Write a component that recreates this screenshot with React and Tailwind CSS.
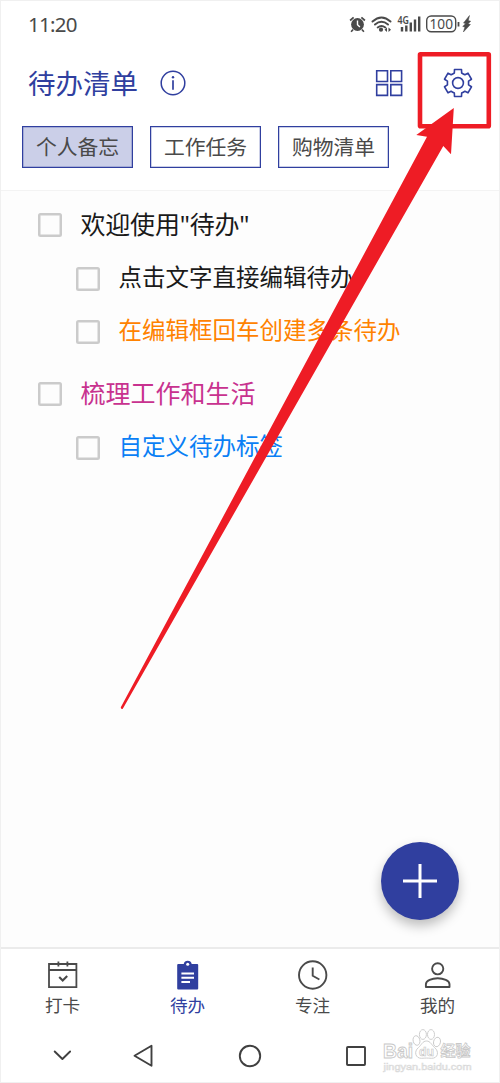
import React from "react";

const gearPath = () => {
  const pt = (r, deg) => {
    const a = ((deg - 90) * Math.PI) / 180;
    return `${(r * Math.cos(a)).toFixed(2)} ${(r * Math.sin(a)).toFixed(2)}`;
  };
  let d = "";
  for (let k = 0; k < 6; k++) {
    const c = k * 60;
    d += `${k ? "L" : "M"}${pt(10.7, c - 20)} L${pt(14, c - 14.5)} L${pt(14, c + 14.5)} L${pt(10.7, c + 20)} Q${pt(10.6, c + 30)} ${pt(10.7, c + 40)} `;
  }
  return d + "Z";
};

function StatusBar() {
  return (
    <div className="flex h-[46px] items-center justify-between pl-[27px] pr-[26px] text-[#4a4a4a]">
      <span className="text-[20.5px] leading-none tracking-[-0.7px] font-['Noto_Sans',sans-serif]">11:20</span>
      <svg className="h-[22px] w-[124px]" viewBox="349.5 13 124 22" fill="none" stroke="#4a4a4a">
        <circle cx="358" cy="24.5" r="6.4" fill="#4a4a4a" stroke="none" />
        <path d="M350.6 20.5l3.5-3.2M361.9 17.3l3.5 3.2M353.6 29.5l-2 2.2M362.4 29.5l2 2.2" strokeWidth="1.7" />
        <path d="M358 20.5v4.3l2.4 2.3" stroke="#fff" strokeWidth="1.4" />
        <path d="M373 21.5q9-8 18 0M375.5 24.6q6.5-5.5 13 0M378.2 27.5q3.8-3 7.6 0" strokeWidth="1.9" strokeLinecap="round" />
        <circle cx="381.5" cy="29.7" r="2.1" fill="#4a4a4a" stroke="none" />
        <path d="M385 29.8l2.5-2.2v4.4zM391.5 29.8l-2.5-2.2v4.4z" fill="#4a4a4a" stroke="none" />
        <text x="398" y="23.5" fontSize="10" fontWeight="600" fill="#4a4a4a" stroke="none" fontFamily="Noto Sans, sans-serif" textLength="11.5" lengthAdjust="spacingAndGlyphs">4G</text>
        <path d="M402.5 31.5v-4.5M406.8 31.5v-6M411.3 31.5v-9M415.5 31.5v-12M419.7 31.5v-15" strokeWidth="2.4" />
        <rect x="427.2" y="16" width="29" height="15.7" rx="4.5" strokeWidth="1.4" />
        <text x="430" y="29" fontSize="14.5" fill="#4a4a4a" stroke="none" fontFamily="Noto Sans, sans-serif" textLength="23.5" lengthAdjust="spacingAndGlyphs">100</text>
        <path d="M459 22v4.5" strokeWidth="1.8" />
        <path d="M470 15.5l-6 7.5 2.2.6-3 2.8 2.2.6-1.5 5 7-7.5-2.3-.7 2.6-2.6-2.4-.6z" fill="#4a4a4a" stroke="#4a4a4a" strokeWidth="0.5" />
      </svg>
    </div>
  );
}

function Header() {
  return (
    <div className="flex h-[72px] items-center pl-[27px] pr-[25px]">
      <h1 className="pt-px text-[27.5px] leading-none">待办清单</h1>
      <svg className="ml-[22px] h-[26px] w-[26px]" viewBox="0 0 26 26" fill="none" stroke="currentColor">
        <circle cx="13" cy="13" r="11.8" strokeWidth="1.5" />
        <path d="M13 10.2v9.5" strokeWidth="1.7" />
        <circle cx="13" cy="7.3" r="1.2" fill="currentColor" stroke="none" />
      </svg>
      <svg className="ml-auto h-[28px] w-[28px]" viewBox="0 0 28 28" fill="none" stroke="currentColor" strokeWidth="1.6">
        <path d="M1.7 1.7h10.8v10.8h-10.8zM15.8 1.7h10.8v10.8h-10.8zM1.7 15.6h10.8v10.8h-10.8zM15.8 15.6h10.8v10.8h-10.8z" />
      </svg>
      <svg className="ml-[39px] h-[32px] w-[32px]" viewBox="-16 -16 32 32" fill="none" stroke="currentColor" strokeWidth="1.6" strokeLinejoin="round">
        <path d={gearPath()} />
        <circle r="5.4" />
      </svg>
    </div>
  );
}

const chips = [
  { label: "个人备忘", active: true },
  { label: "工作任务", active: false },
  { label: "购物清单", active: false },
];

function Chips() {
  return (
    <div className="flex h-[71px] items-start gap-[17px] pl-[21px] pt-[7px]">
      {chips.map((c) => (
        <button
          key={c.label}
          className={`flex h-[42px] w-[111px] items-center justify-center border border-[#303f9f] text-[20.8px] leading-none text-[#4a4a4a] shadow-[inset_0_0_0_0.5px_rgba(48,63,159,0.5)] ${c.active ? "bg-[#cbcfe8]" : "bg-white"}`}
        >
          {c.label}
        </button>
      ))}
    </div>
  );
}

const tasks = [
  { text: '欢迎使用"待办"', row: "h-[54px] pl-[37px] text-[25px] tracking-[-0.2px] text-[#1a1a1a]" },
  { text: "点击文字直接编辑待办", row: "h-[53px] pl-[75px] text-[23.5px] text-[#1a1a1a]" },
  { text: "在编辑框回车创建多条待办", row: "h-[53px] pl-[75px] text-[23.5px] text-[#ff8200]" },
  { text: "梳理工作和生活", row: "mt-[9px] h-[54px] pl-[37px] text-[25px] text-[#c8328f]" },
  { text: "自定义待办标签", row: "h-[53px] pl-[75px] text-[23.5px] text-[#0a7ff5]" },
];

function TaskList() {
  return (
    <main className="flex flex-1 flex-col border-t border-[#f3f3f3] bg-[#fdfdfd] pt-[7px]">
      {tasks.map((t) => (
        <div key={t.text} className={`flex items-center gap-[18.5px] leading-none whitespace-nowrap ${t.row}`}>
          <span className="h-[24px] w-[24px] shrink-0 rounded-[2.5px] border-2 border-[#cbcbcb] shadow-[inset_0_0_0_0.5px_#cbcbcb]" />
          <span className="-mt-px">{t.text}</span>
        </div>
      ))}
      <button className="mt-auto mr-[40.5px] mb-[27px] flex h-[78px] w-[78px] items-center justify-center self-end rounded-full bg-[#303f9f] shadow-[0_6px_12px_rgba(0,0,0,0.25)]">
        <svg className="h-[34px] w-[34px]" viewBox="0 0 34 34" stroke="#fff" strokeWidth="3">
          <path d="M17 0v34M0 17h34" />
        </svg>
      </button>
    </main>
  );
}

const tabs = [
  {
    label: "打卡",
    icon: (
      <g fill="none" stroke="currentColor" strokeWidth="1.8">
        <path d="M2.3 4h27.4v23.2H2.3zM2.3 10h27.4M11.7 1.5v5M20.7 1.5v5" />
        <path d="M12.5 17l3.5 3.5 4.5-4.5" strokeWidth="2.1" />
      </g>
    ),
  },
  {
    label: "待办",
    active: true,
    icon: (
      <g>
        <path d="M6.5 4h5.5a4.1 4.1 0 0 1 8 0h5.500q1 0 1 1v23.500q0 1-1 1H6.500q-1 0-1-1V5q0-1 1-1z" fill="currentColor" />
        <circle cx="16" cy="4.3" r="1.5" fill="#fff" />
        <path d="M9.7 13.6h12.6M9.7 17.7h12.6M9.7 21.9h8.6" stroke="#fff" strokeWidth="2" />
      </g>
    ),
  },
  {
    label: "专注",
    icon: (
      <g fill="none" stroke="currentColor" strokeWidth="1.9">
        <circle cx="16" cy="15" r="13.7" />
        <path d="M16 7.5v8.3l6.7 3.7" />
      </g>
    ),
  },
  {
    label: "我的",
    icon: (
      <g fill="none" stroke="currentColor" strokeWidth="1.9" strokeLinejoin="round">
        <circle cx="16" cy="8.8" r="5.6" />
        <path d="M4.2 27v-2.8c0-3.6 6-6 11.8-6s11.8 2.4 11.8 6V27z" />
      </g>
    ),
  },
];

function TabBar() {
  return (
    <nav className="-mx-px grid h-[81px] grid-cols-4 border-t-2 border-[#ebebeb] pt-[11px]">
      {tabs.map((t) => (
        <div key={t.label} className={`flex flex-col items-center gap-[5px] text-[17.6px] leading-none ${t.active ? "text-[#303f9f]" : "text-[#4a4a4a]"}`}>
          <svg className="h-[32px] w-[32px]" viewBox="0.3 0 32 32">{t.icon}</svg>
          <span>{t.label}</span>
        </div>
      ))}
    </nav>
  );
}

function SystemNav() {
  return (
    <div className="flex h-[54px] items-center">
      <svg className="h-[54px] w-[370px]" viewBox="1 1028 370 54" fill="none" stroke="#404040" strokeWidth="1.9" strokeLinejoin="round" strokeLinecap="round">
        <path d="M54.7 1051.5l7.7 7.5 7.7-7.5M151.5 1045.8v20l-17-10z" />
        <circle cx="250" cy="1056" r="10.2" />
        <rect x="347" y="1047" width="18" height="18" rx="0.8" />
      </svg>
      <svg className="-mt-[6px] h-[48px] w-[110px] overflow-visible" viewBox="371 1027.5 110 48" fill="#fff" stroke="#c8c8c8" strokeWidth="0.9">
        <text x="383" y="1057" fontSize="20" fontWeight="700" fontFamily="Liberation Sans, sans-serif" textLength="30" lengthAdjust="spacingAndGlyphs">Bai</text>
        <ellipse cx="416.5" cy="1040" rx="3.4" ry="4.8" transform="rotate(-12 416.5 1040)" />
        <ellipse cx="422.9" cy="1034" rx="3.5" ry="4.9" />
        <ellipse cx="431" cy="1034" rx="3.5" ry="4.9" />
        <ellipse cx="437" cy="1041.5" rx="3.4" ry="4.8" transform="rotate(14 437 1041.5)" />
        <path d="M426.500 1040.500c4 0 5 4 8 6.500 5 4 3.500 11-3 10.800-4-.3-6-.3-10 0-6 .2-8-6.800-3-10.800 3-2.500 4-6.500 8-6.500z" />
        <text x="419" y="1055.5" fontSize="13.5" fontWeight="700" fontFamily="Liberation Sans, sans-serif" textLength="15" strokeWidth="0.7" lengthAdjust="spacingAndGlyphs">du</text>
        <text x="440.5" y="1055.5" fontSize="15" fontWeight="700" fontFamily="Noto Sans CJK SC, sans-serif" textLength="30" strokeWidth="0.8">经验</text>
        <text x="383.5" y="1069.500" fontSize="9.500" fontWeight="400" fontFamily="Liberation Sans, sans-serif" textLength="88" lengthAdjust="spacingAndGlyphs" fill="#f2f2f2" stroke="#d8d8d8" strokeWidth="0.5">jingyan.baidu.com</text>
      </svg>
    </div>
  );
}

export default function App() {
  return (
    <div className="relative flex h-[1083px] w-[500px] flex-col overflow-hidden border border-[#f0f0f0] bg-white font-['Noto_Sans','Noto_Sans_CJK_SC',sans-serif]">
      <StatusBar />
      <div className="text-[#303f9f]">
        <Header />
        <Chips />
      </div>
      <TaskList />
      <TabBar />
      <SystemNav />
      <svg className="pointer-events-none absolute -left-px -top-px h-[1083px] w-[500px]" viewBox="0 0 500 1083">
        <rect x="420" y="54.3" width="68.8" height="72" rx="0.5" fill="none" stroke="#ee1c25" strokeWidth="4.6" strokeLinejoin="round" />
        <path d="M453.8 108L416.3 134.900L427 136.700L120.800 707.300Q120.700 709.500 122.800 708.800L443.300 146L451 154.300Z" fill="#ee1c25" />
      </svg>
    </div>
  );
}
